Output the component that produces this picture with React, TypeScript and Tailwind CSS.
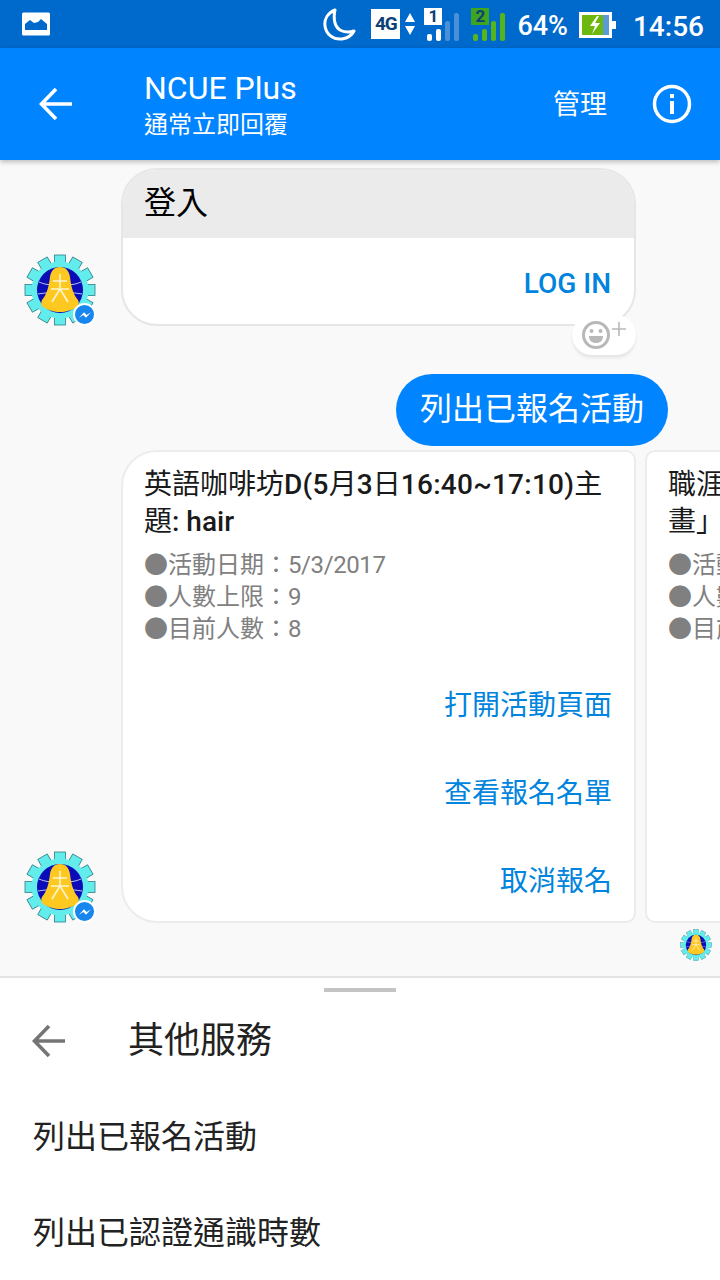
const fontStack = "font-['Roboto','Noto_Sans_CJK_TC',sans-serif]";

const gearTeeth = [0, 30, 60, 90, 120, 150, 180, 210, 240, 270, 300, 330];

function Logo({ className }: { className: string }) {
  return (
    <svg viewBox="0 0 72 72" className={className}>
      {gearTeeth.map((deg) => (
        <rect key={deg} x="30.5" y="1" width="11" height="12" fill="#62ecec" stroke="#2f7f86" strokeWidth="0.8" transform={`rotate(${deg} 36 36)`} />
      ))}
      <circle cx="36" cy="36" r="28.5" fill="#62ecec" />
      <circle cx="36" cy="36" r="23" fill="#0b0bb8" />
      <path d="M15 28c7 3 12 3 15 2M57 28c-7 3-12 3-15 2M14 40c6-1 10-1 13-2M58 40c-6-1-10-1-13-2" stroke="#b9c4ee" strokeWidth="1" fill="none" />
      <path d="M36 13c6 0 9 4 10 10 1 9 3 17 8 23 1 2 1 4 0 6-5 4-12 6-18 6s-13-2-18-6c-1-2-1-4 0-6 5-6 7-14 8-23 1-6 4-10 10-10z" fill="#fdc921" />
      <path d="M29 27h14M27 35h18M36 20v15l-8 13M36 35l8 13" stroke="#fbf3cf" strokeWidth="1.6" fill="none" />
    </svg>
  );
}

function Avatar() {
  return (
    <div className="relative w-[72px] h-[72px] shrink-0">
      <Logo className="w-[72px] h-[72px]" />
      <div className="absolute right-0 bottom-0 w-[19px] h-[19px] rounded-full bg-[#1786ee] border-2 border-white box-content flex items-center justify-center">
        <svg viewBox="0 0 24 24" className="w-[16px] h-[16px]">
          <path d="M3 16l7.5-8 4 4L21 8l-7.5 8-4-4z" fill="white" />
        </svg>
      </div>
    </div>
  );
}

function BackArrow({ color, className }: { color: string; className: string }) {
  return (
    <svg viewBox="0 0 34 34" className={className}>
      <path d="M33 17H3M17 2L2.500 17 17 32" fill="none" stroke={color} strokeWidth="3.600" />
    </svg>
  );
}

function SignalBars({ on, off, active }: { on: string; off: string; active: number }) {
  const bars = [
    { x: 0, h: 7 },
    { x: 9, h: 12 },
    { x: 18, h: 20 },
    { x: 27, h: 28 },
  ];
  return (
    <svg viewBox="0 0 33 28" className="w-[33px] h-[28px] block">
      {bars.map((b, i) => (
        <rect key={b.x} x={b.x} y={28 - b.h} width="5" height={b.h} rx="2" fill={i < active ? on : off} />
      ))}
    </svg>
  );
}

function StatusBar() {
  return (
    <div className={`h-12 bg-[#0069cc] flex items-center shrink-0 ${fontStack}`}>
      <svg viewBox="0 0 30 24" className="w-[30px] h-6 ml-[21px]">
        <path d="M1 2a1.500 1.500 0 0 1 1.500-1.500h25A1.500 1.500 0 0 1 29 2v20a1.500 1.500 0 0 1-1.500 1.500h-25A1.500 1.500 0 0 1 1 22z" fill="white" />
        <path d="M4 18v-6l5-4 4 3 4-1 3-3 6 5v6z" fill="#0069cc" />
      </svg>
      <svg viewBox="0 0 34 36" className="w-[34px] h-9 ml-auto mt-[2px]">
        <path d="M13 3C6 6 2 12 3 19c1 8 8 14 17 13 6-1 10-4 12-8-10 3-17-1-19-8-1-4-1-9 0-13z" fill="none" stroke="white" strokeWidth="3" strokeLinejoin="round" />
      </svg>
      <div className="ml-[15px] w-[29px] h-[30px] bg-white text-[#0d3f78] text-[19px] font-bold leading-[30px] text-center tracking-[-1px]">4G</div>
      <svg viewBox="0 0 10 24" className="w-[10px] h-6 ml-[5px]">
        <path d="M5 1l5 9H0zM5 23l-5-9h10z" fill="white" />
      </svg>
      <div className="relative ml-[9px] w-[36px] h-[36px]">
        <div className="absolute left-0 top-[2px] w-[18px] h-[17px] bg-white text-[#0d3f78] text-[17px] font-bold leading-[17px] text-center">1</div>
        <div className="absolute left-[3px] bottom-[1px]">
          <SignalBars on="white" off="#4a90d9" active={2} />
        </div>
      </div>
      <div className="relative ml-[11px] w-[36px] h-[36px]">
        <div className="absolute left-0 top-[2px] w-[18px] h-[17px] bg-[#3da51f] text-[#0d3f78] text-[17px] font-bold leading-[17px] text-center">2</div>
        <div className="absolute left-[2px] bottom-[1px]">
          <SignalBars on="#54b51c" off="#54b51c" active={4} />
        </div>
      </div>
      <span className="ml-[10px] mt-[5px] text-[27px] leading-none font-medium text-white">64%</span>
      <svg viewBox="0 0 38 26" className="w-[38px] h-[26px] ml-[11px] mt-[2px]">
        <path d="M0 0h33v26H0z" fill="white" />
        <path d="M3 3h21v20H3z" fill="#6cb80e" />
        <path d="M24 3h6v20h-6z" fill="#5b9bd5" />
        <path d="M33 9h4v8h-4z" fill="white" />
        <path d="M18 4l-7 10h5l-3 8 8-11h-5l4-7z" fill="white" />
      </svg>
      <span className="ml-[16px] mr-[16px] mt-[5px] text-[28px] leading-none font-medium text-white">14:56</span>
    </div>
  );
}

function Header() {
  return (
    <header className={`relative z-10 h-28 bg-[#0084ff] text-white flex items-center shrink-0 shadow-[0_2px_5px_rgba(0,0,0,0.25)] ${fontStack}`}>
      <BackArrow color="white" className="w-[34px] h-[34px] ml-[39px] shrink-0" />
      <div className="ml-[71px] flex flex-col pt-[3px]">
        <div className="text-[32px] leading-[38px]">NCUE Plus</div>
        <div className="text-[24px] leading-[36px]">通常立即回覆</div>
      </div>
      <span className="ml-auto mt-[2px] text-[27px]">管理</span>
      <svg viewBox="0 0 40 40" className="w-10 h-10 ml-[45px] mr-[28px]">
        <circle cx="20" cy="20" r="17.500" fill="none" stroke="white" strokeWidth="3.500" />
        <rect x="18" y="17" width="4" height="13" fill="white" />
        <rect x="18" y="10" width="4" height="4" fill="white" />
      </svg>
    </header>
  );
}

function LoginCard() {
  return (
    <div className="flex items-end pl-6">
      <Avatar />
      <div className="relative ml-[25px] w-[515px]">
        <div className="rounded-[36px] border-2 border-[#e6e6e6] bg-white overflow-hidden">
          <div className="h-[68px] bg-[#ebebeb] pl-[21px] text-[32px] leading-[66px] text-black">登入</div>
          <div className="h-[86px] pr-[23px] text-right text-[28px] leading-[92px] font-medium text-[#0084dd]">LOG IN</div>
        </div>
        <div className="absolute right-0 bottom-[-29px] w-16 h-10 rounded-[20px] bg-white shadow-[0_3px_3px_rgba(0,0,0,0.08)] flex items-center justify-center">
          <svg viewBox="0 0 44 32" className="w-11 h-8">
            <circle cx="14" cy="16" r="12.500" fill="none" stroke="#b8b8b8" strokeWidth="3" />
            <circle cx="9.500" cy="12" r="2" fill="#b8b8b8" />
            <circle cx="18.500" cy="12" r="2" fill="#b8b8b8" />
            <path d="M7 17h14c0 5-3 7-7 7s-7-2-7-7z" fill="#b8b8b8" />
            <path d="M37 3v14M30 10h14" stroke="#b8b8b8" strokeWidth="1.600" />
          </svg>
        </div>
      </div>
    </div>
  );
}

function ActivityCard() {
  const actions = ['打開活動頁面', '查看報名名單', '取消報名'];
  return (
    <div className="w-[515px] h-[473px] shrink-0 rounded-l-[36px] rounded-r-[10px] border-2 border-[#ececec] bg-white pl-[21px] pr-[22px] pt-[14px]">
      <div className="text-[28px] leading-[37px] text-[#1a1a1a] whitespace-nowrap">
        英語咖啡坊
        <span className="font-medium tracking-[0.25px]">D(5</span>月
        <span className="font-medium tracking-[0.25px]">3</span>日
        <span className="font-medium tracking-[0.25px]">16:40~17:10)</span>主
        <br />
        題<span className="font-medium">: hair</span>
      </div>
      <div className="mt-[9px] text-[24px] leading-[32px] text-[#808080]">
        <div>●活動日期：<span className="tracking-[-0.4px]">5/3/2017</span></div>
        <div>●人數上限：9</div>
        <div>●目前人數：8</div>
      </div>
      <div className="mt-[17px] flex flex-col text-right text-[28px] leading-[88px] text-[#0084dd]">
        {actions.map((a) => (
          <div key={a}>{a}</div>
        ))}
      </div>
    </div>
  );
}

function NextCard() {
  return (
    <div className="w-[515px] h-[473px] shrink-0 rounded-l-[10px] border-2 border-[#ececec] bg-white pl-[21px] pt-[14px]">
      <div className="text-[28px] leading-[37px] text-[#1a1a1a]">
        職涯規劃
        <br />
        畫」
      </div>
      <div className="mt-[9px] text-[24px] leading-[32px] text-[#808080]">
        <div>●活動日期</div>
        <div>●人數上限</div>
        <div>●目前人數</div>
      </div>
    </div>
  );
}

function Chat() {
  return (
    <div className={`h-[816px] bg-[#f9f9f9] pt-2 flex flex-col overflow-hidden shrink-0 ${fontStack}`}>
      <LoginCard />
      <div className="mt-12 mr-[52px] self-end h-[72px] rounded-full bg-[#0084ff] px-6 text-[32px] leading-[70px] text-white">列出已報名活動</div>
      <div className="mt-1 flex items-end pl-6">
        <Avatar />
        <div className="ml-[25px] flex gap-[9px]">
          <ActivityCard />
          <NextCard />
        </div>
      </div>
      <div className="mt-[6px] self-end mr-2">
        <Logo className="w-8 h-8" />
      </div>
    </div>
  );
}

function Sheet() {
  return (
    <div className={`flex-1 bg-white border-t-[2px] border-[#e4e4e4] ${fontStack}`}>
      <div className="mx-auto mt-[10px] w-[72px] h-1 bg-[#c4c4c4]" />
      <div className="flex items-center h-[97px] pl-[32px]">
        <BackArrow color="#757575" className="w-[34px] h-[34px]" />
        <span className="ml-[62px] text-[36px] text-[#222]">其他服務</span>
      </div>
      <div className="pl-[33px] text-[32px] leading-[96px] text-[#222]">列出已報名活動</div>
      <div className="pl-[33px] text-[32px] leading-[96px] text-[#222]">列出已認證通識時數</div>
    </div>
  );
}

export default function App() {
  return (
    <div className="w-[720px] h-[1280px] flex flex-col overflow-hidden bg-white">
      <StatusBar />
      <Header />
      <Chat />
      <Sheet />
    </div>
  );
}
